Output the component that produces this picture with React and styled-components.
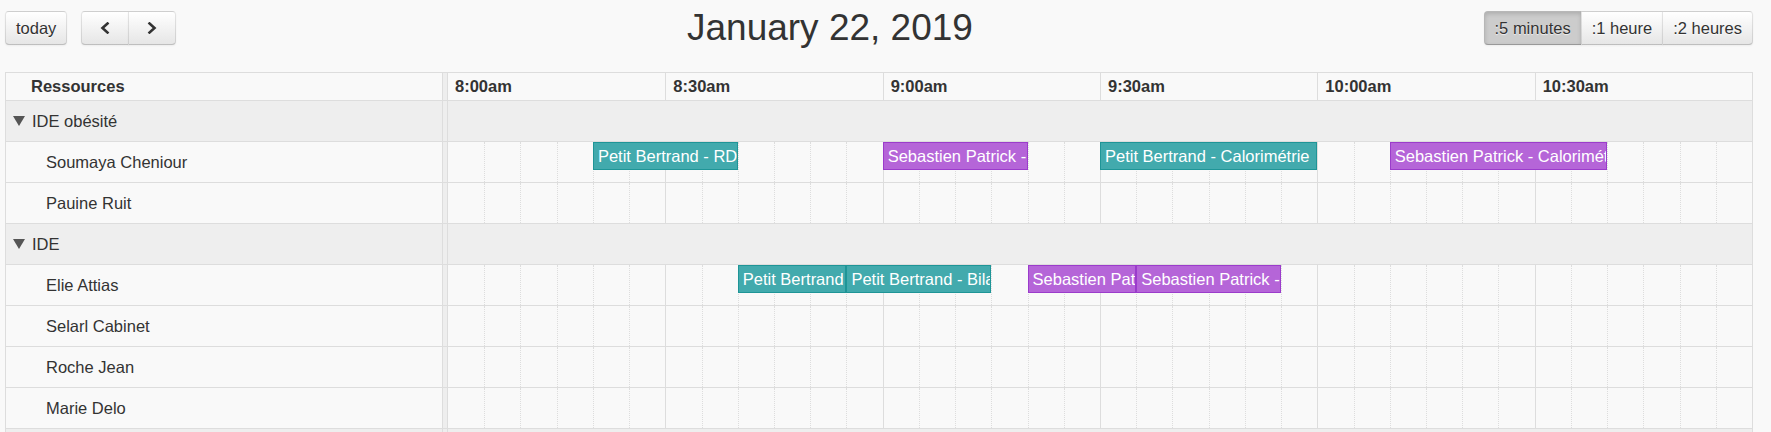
import React from 'react';
import styled, { createGlobalStyle } from 'styled-components';

const GlobalStyle = createGlobalStyle`
  html, body {
    margin: 0;
    padding: 0;
    background: #f9f9f9;
    overflow: hidden;
  }
  body {
    font-family: "Liberation Sans", Arial, sans-serif;
    font-size: 16.5px;
    color: #333;
  }
`;

const START = 8 * 60;
const SPAN = 180;
const SLOTS = 36;

const toMin = (t) => {
  const [h, m] = t.split(':').map(Number);
  return h * 60 + m;
};

const groups = [
  {
    name: 'IDE obésité',
    resources: [
      {
        name: 'Soumaya Cheniour',
        events: [
          { title: 'Petit Bertrand - RDV', start: '8:20', end: '8:40', kind: 'teal' },
          { title: 'Sebastien Patrick - Calorimétrie', start: '9:00', end: '9:20', kind: 'purple' },
          { title: 'Petit Bertrand - Calorimétrie', start: '9:30', end: '10:00', kind: 'teal' },
          { title: 'Sebastien Patrick - Calorimétrie', start: '10:10', end: '10:40', kind: 'purple' },
        ],
      },
      { name: 'Pauine Ruit', events: [] },
    ],
  },
  {
    name: 'IDE',
    resources: [
      {
        name: 'Elie Attias',
        events: [
          { title: 'Petit Bertrand', start: '8:40', end: '8:55', kind: 'teal' },
          { title: 'Petit Bertrand - Bilan', start: '8:55', end: '9:15', kind: 'teal' },
          { title: 'Sebastien Patrick', start: '9:20', end: '9:35', kind: 'purple' },
          { title: 'Sebastien Patrick - Calorimétrie', start: '9:35', end: '9:55', kind: 'purple' },
        ],
      },
      { name: 'Selarl Cabinet', events: [] },
      { name: 'Roche Jean', events: [] },
      { name: 'Marie Delo', events: [] },
    ],
  },
  { name: '', resources: [] },
];

const hours = ['8:00am', '8:30am', '9:00am', '9:30am', '10:00am', '10:30am'];

const Page = styled.div`
  width: 1748px;
  padding: 11px 0 0 5px;
`;

const Toolbar = styled.div`
  display: flex;
  justify-content: space-between;
  align-items: center;
  height: 34px;
  margin-bottom: 27px;
`;

const ToolGroup = styled.div`
  display: flex;
  align-items: center;
  gap: 14px;
`;

const Title = styled.h2`
  margin: 0;
  font-size: 37px;
  font-weight: normal;
  color: #333;
`;

const ButtonGroup = styled.div`
  display: flex;
  & > button {
    border-radius: 0;
  }
  & > button + button {
    margin-left: -1px;
  }
  & > button:first-child {
    border-radius: 4px 0 0 4px;
  }
  & > button:last-child {
    border-radius: 0 4px 4px 0;
  }
`;

const Button = styled.button`
  box-sizing: border-box;
  height: 34px;
  ${(p) => (p.$width ? `width: ${p.$width}px;` : 'padding: 0 10px;')}
  display: flex;
  align-items: center;
  justify-content: center;
  font-family: inherit;
  font-size: 16.5px;
  color: #333;
  background: ${(p) => (p.$active ? '#cccccc' : 'linear-gradient(#ffffff, #e6e6e6)')};
  border: 1px solid;
  border-color: rgba(0, 0, 0, 0.1) rgba(0, 0, 0, 0.1) rgba(0, 0, 0, 0.25);
  border-radius: 4px;
  box-shadow: ${(p) =>
    p.$active
      ? 'inset 0 2px 4px rgba(0,0,0,.15), 0 1px 2px rgba(0,0,0,.05)'
      : 'inset 0 1px 0 rgba(255,255,255,.2), 0 1px 2px rgba(0,0,0,.05)'};
  text-shadow: 0 1px 1px rgba(255, 255, 255, 0.75);
  cursor: pointer;
`;

const Table = styled.div`
  border-top: 1px solid #ddd;
`;

const Row = styled.div`
  display: flex;
  height: ${(p) => p.$height}px;
  border-bottom: 1px solid #ddd;
  background: ${(p) => (p.$group ? '#eeeeee' : 'transparent')};
`;

const ResourceCell = styled.div`
  box-sizing: border-box;
  width: 437px;
  flex: none;
  border-left: 1px solid #ddd;
  display: flex;
  align-items: center;
  gap: 7px;
  padding-left: ${(p) => p.$indent}px;
  font-weight: ${(p) => (p.$bold ? 'bold' : 'normal')};
  white-space: nowrap;
  overflow: hidden;
`;

const Divider = styled.div`
  box-sizing: border-box;
  width: 6px;
  flex: none;
  background: #eeeeee;
  border-left: 1px solid #ddd;
  border-right: 1px solid #ddd;
`;

const HeaderLane = styled.div`
  flex: 1;
  display: grid;
  grid-template-columns: repeat(6, 1fr);
  border-right: 1px solid #ddd;
`;

const HourLabel = styled.div`
  display: flex;
  align-items: center;
  padding-left: 7px;
  font-weight: bold;
  border-left: ${(p) => (p.$first ? 'none' : '1px solid #ddd')};
`;

const Lane = styled.div`
  position: relative;
  flex: 1;
  display: grid;
  grid-template-columns: repeat(${SLOTS}, 1fr);
  border-right: 1px solid #ddd;
`;

const GroupLane = styled.div`
  flex: 1;
  border-right: 1px solid #ddd;
`;

const Slot = styled.div`
  border-left: ${(p) => (p.$first ? 'none' : p.$major ? '1px solid #ddd' : '1px dotted #ddd')};
`;

const Event = styled.div`
  position: absolute;
  top: 0;
  box-sizing: border-box;
  height: 28px;
  line-height: 26px;
  padding: 0 4px;
  color: #fff;
  white-space: nowrap;
  overflow: hidden;
  background: ${(p) => (p.$kind === 'teal' ? '#42aaad' : '#b565d8')};
  border: 1px solid ${(p) => (p.$kind === 'teal' ? '#1f9597' : '#9b3ccb')};
`;

const Chevron = ({ dir }) => (
  <svg width="12" height="12" viewBox="0 0 12 12">
    <polyline
      points={dir === 'left' ? '8.5,1.5 3.5,6 8.5,10.5' : '3.5,1.5 8.5,6 3.5,10.5'}
      fill="none"
      stroke="#333"
      strokeWidth="2.6"
      strokeLinecap="square"
    />
  </svg>
);

const Triangle = () => (
  <svg width="12" height="10" viewBox="0 0 12 10">
    <polygon points="0,0 12,0 6,10" fill="#555" />
  </svg>
);

const GroupRow = ({ name }) => (
  <Row $height={40} $group>
    <ResourceCell $indent={7}>
      {name && <Triangle />}
      {name}
    </ResourceCell>
    <Divider />
    <GroupLane />
  </Row>
);

const ResourceRow = ({ resource }) => (
  <Row $height={40}>
    <ResourceCell $indent={40}>{resource.name}</ResourceCell>
    <Divider />
    <Lane>
      {Array.from({ length: SLOTS }).map((_, i) => (
        <Slot key={i} $first={i === 0} $major={i % 6 === 0} />
      ))}
      {resource.events.map((ev) => {
        const s = toMin(ev.start) - START;
        const d = toMin(ev.end) - toMin(ev.start);
        return (
          <Event
            key={ev.start}
            $kind={ev.kind}
            style={{ left: `${(s / SPAN) * 100}%`, width: `${(d / SPAN) * 100}%` }}
          >
            {ev.title}
          </Event>
        );
      })}
    </Lane>
  </Row>
);

export default function App() {
  return (
    <Page>
      <GlobalStyle />
      <Toolbar>
        <ToolGroup>
          <Button>today</Button>
          <ButtonGroup>
            <Button $width={48}>
              <Chevron dir="left" />
            </Button>
            <Button $width={48}>
              <Chevron dir="right" />
            </Button>
          </ButtonGroup>
        </ToolGroup>
        <Title>January 22, 2019</Title>
        <ButtonGroup>
          <Button $active>:5 minutes</Button>
          <Button>:1 heure</Button>
          <Button>:2 heures</Button>
        </ButtonGroup>
      </Toolbar>
      <Table>
        <Row $height={27}>
          <ResourceCell $indent={25} $bold>
            Ressources
          </ResourceCell>
          <Divider />
          <HeaderLane>
            {hours.map((h, i) => (
              <HourLabel key={h} $first={i === 0}>
                {h}
              </HourLabel>
            ))}
          </HeaderLane>
        </Row>
        {groups.map((g, gi) => (
          <React.Fragment key={gi}>
            <GroupRow name={g.name} />
            {g.resources.map((r) => (
              <ResourceRow key={r.name} resource={r} />
            ))}
          </React.Fragment>
        ))}
      </Table>
    </Page>
  );
}
